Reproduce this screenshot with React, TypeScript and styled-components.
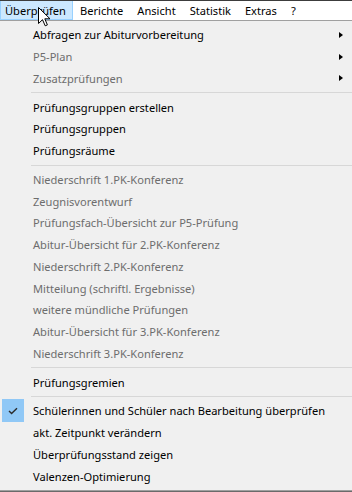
import React from "react";
import styled, { createGlobalStyle } from "styled-components";

const GlobalStyle = createGlobalStyle`
  html, body {
    margin: 0;
    padding: 0;
    background: #f0f0f0;
  }
  #root {
    width: 352px;
    height: 492px;
    overflow: hidden;
  }
`;

type Entry =
  | { kind: "item"; label: string; disabled?: boolean; submenu?: boolean; checked?: boolean }
  | { kind: "sep" };

const entries: Entry[] = [
  { kind: "item", label: "Abfragen zur Abiturvorbereitung", submenu: true },
  { kind: "item", label: "P5-Plan", disabled: true, submenu: true },
  { kind: "item", label: "Zusatzprüfungen", disabled: true, submenu: true },
  { kind: "sep" },
  { kind: "item", label: "Prüfungsgruppen erstellen" },
  { kind: "item", label: "Prüfungsgruppen" },
  { kind: "item", label: "Prüfungsräume" },
  { kind: "sep" },
  { kind: "item", label: "Niederschrift 1.PK-Konferenz", disabled: true },
  { kind: "item", label: "Zeugnisvorentwurf", disabled: true },
  { kind: "item", label: "Prüfungsfach-Übersicht zur P5-Prüfung", disabled: true },
  { kind: "item", label: "Abitur-Übersicht für 2.PK-Konferenz", disabled: true },
  { kind: "item", label: "Niederschrift 2.PK-Konferenz", disabled: true },
  { kind: "item", label: "Mitteilung (schriftl. Ergebnisse)", disabled: true },
  { kind: "item", label: "weitere mündliche Prüfungen", disabled: true },
  { kind: "item", label: "Abitur-Übersicht für 3.PK-Konferenz", disabled: true },
  { kind: "item", label: "Niederschrift 3.PK-Konferenz", disabled: true },
  { kind: "sep" },
  { kind: "item", label: "Prüfungsgremien" },
  { kind: "sep" },
  { kind: "item", label: "Schülerinnen und Schüler nach Bearbeitung überprüfen", checked: true },
  { kind: "item", label: "akt. Zeitpunkt verändern" },
  { kind: "item", label: "Überprüfungsstand zeigen" },
  { kind: "item", label: "Valenzen-Optimierung" },
];

const topMenus = ["Überprüfen", "Berichte", "Ansicht", "Statistik", "Extras", "?"];

export default function App() {
  return (
    <>
      <GlobalStyle />
      <Window>
        <MenuBar>
          {topMenus.map((m, i) => (
            <TopItem key={m} $open={i === 0}>
              {m}
            </TopItem>
          ))}
        </MenuBar>
        <Dropdown>
          {entries.map((e, i) =>
            e.kind === "sep" ? (
              <Separator key={i} />
            ) : (
              <Item key={i} $disabled={e.disabled}>
                <Gutter>
                  {e.checked && (
                    <CheckBox>
                      <svg width="10" height="8" viewBox="0 0 10 8">
                        <path d="M1 4 L3.6 6.6 L9 1.2" fill="none" stroke="#2b2b2b" strokeWidth="1.4" />
                      </svg>
                    </CheckBox>
                  )}
                </Gutter>
                <Label>{e.label}</Label>
                {e.submenu && <Arrow />}
              </Item>
            )
          )}
        </Dropdown>
        <BottomEdge />
        <Cursor width="13" height="20" viewBox="0 0 13 20">
          <path
            d="M0.5 0.5 L0.5 16.5 L4.5 12.7 L7.2 18.8 L9.4 17.9 L6.8 11.8 L12 11.8 Z"
            fill="#fff"
            stroke="#000"
            strokeWidth="1"
            strokeLinejoin="miter"
          />
        </Cursor>
      </Window>
    </>
  );
}

const Window = styled.div`
  position: relative;
  width: 352px;
  height: 492px;
  display: flex;
  flex-direction: column;
  background: #f0f0f0;
  font-family: "Noto Sans", "Liberation Sans", sans-serif;
  font-size: 11.1px;
  color: #000;
`;

const MenuBar = styled.div`
  display: flex;
  align-items: stretch;
  height: 19px;
  background: #fff;
  border-top: 1px solid #3c3c3c;
  border-bottom: 1px solid #a0a0a0;
`;

const TopItem = styled.div<{ $open?: boolean }>`
  display: flex;
  align-items: center;
  padding: 0 7px 1px 7px;
  background: ${(p) => (p.$open ? "#cce8ff" : "transparent")};
  box-shadow: ${(p) => (p.$open ? "inset -1px -1px 0 #99d1ff, inset 1px 0 0 #99d1ff" : "none")};
  white-space: nowrap;
  &:first-child {
    padding-left: 5px;
  }
`;

const Dropdown = styled.div`
  display: flex;
  flex-direction: column;
  padding-top: 3px;
  flex: 1;
  background: #f0f0f0;
`;

const Item = styled.div<{ $disabled?: boolean }>`
  display: flex;
  align-items: center;
  height: 21.75px;
  color: ${(p) => (p.$disabled ? "#6d6d6d" : "#000")};
  white-space: nowrap;
`;

const Gutter = styled.div`
  width: 33px;
  flex: none;
  display: flex;
  align-items: center;
  align-self: stretch;
`;

const CheckBox = styled.div`
  width: 22px;
  height: 23px;
  margin-left: 2px;
  background: #90c8f6;
  display: flex;
  align-items: center;
  justify-content: center;
`;

const Label = styled.span`
  flex: 1;
  line-height: 1;
`;

const Arrow = styled.span`
  width: 0;
  height: 0;
  margin-right: 9px;
  border-top: 3.5px solid transparent;
  border-bottom: 3.5px solid transparent;
  border-left: 4px solid #000;
`;

const Separator = styled.div`
  height: 7px;
  margin-left: 31px;
  display: flex;
  align-items: center;
  &::after {
    content: "";
    flex: 1;
    height: 1px;
    background: #d7d7d7;
  }
`;

const BottomEdge = styled.div`
  height: 2px;
  flex: none;
  background: linear-gradient(#a0a0a0 0 1px, #6a6a6a 1px);
`;

const Cursor = styled.svg`
  position: absolute;
  left: 38px;
  top: 7px;
`;
